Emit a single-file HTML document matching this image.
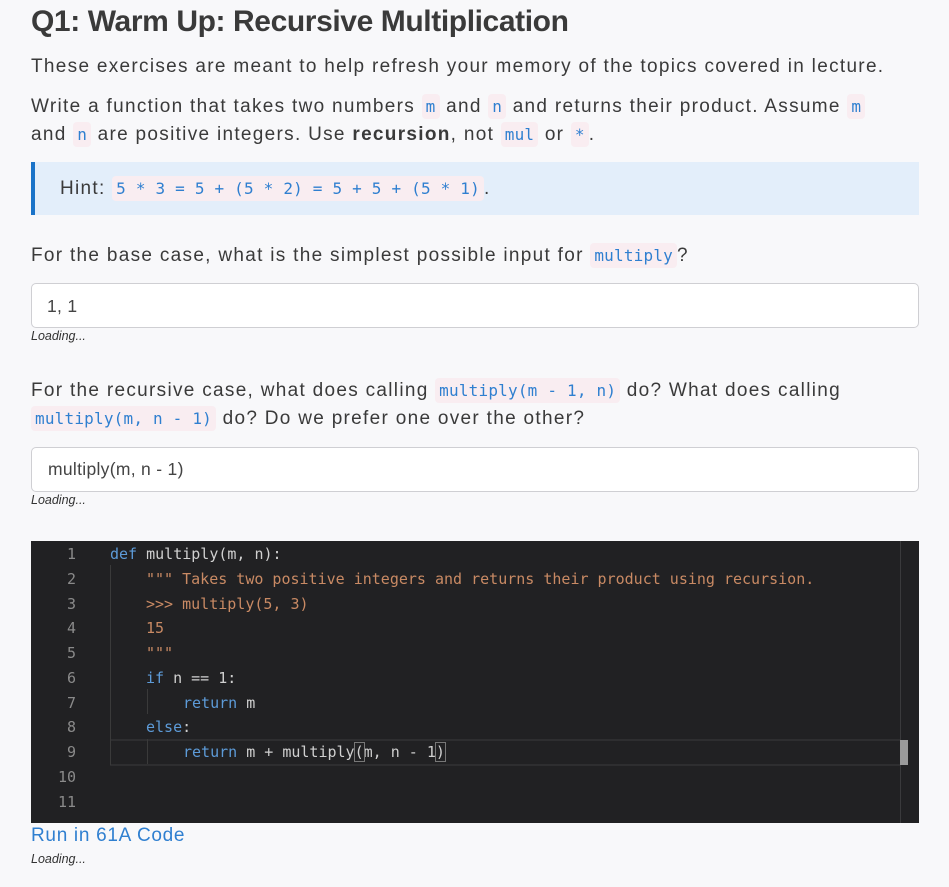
<!DOCTYPE html>
<html><head><meta charset="utf-8">
<style>
body{margin:0;width:949px;height:887px;background:#f8f8fa;font-family:"Liberation Sans",sans-serif;color:#333;position:relative;overflow:hidden}
.a{position:absolute;white-space:nowrap}
.t{font-size:19px;letter-spacing:1.3px;color:#3a3a3a}
code{font-family:"DejaVu Sans Mono",monospace;font-size:16px;color:#2f7fd0;background:#f9edf1;border-radius:4px;padding:3px 4px;letter-spacing:0.2px}
h1{margin:0;font-size:30px;font-weight:bold;color:#3a3a3a;letter-spacing:-0.4px}
.inp{position:absolute;left:31px;width:886px;border:1px solid #cfcfd3;border-radius:5px;background:#fff;font-size:17.5px;color:#444;letter-spacing:0.3px}
.load{font-size:12.5px;font-style:italic;color:#333}
.ed{position:absolute;left:31px;top:541px;width:888px;height:282px;background:#212123}
.ln{position:absolute;left:40px;width:36px;text-align:right;font-family:"DejaVu Sans Mono",monospace;font-size:15px;color:#8a8a8a}
.cd{position:absolute;font-family:"DejaVu Sans Mono",monospace;font-size:15px;color:#d0d0d0;white-space:pre}
.k{color:#5d9bd8}.s{color:#c98a64}
</style></head><body>
<h1 class="a" style="left:31px;top:5px">Q1: Warm Up: Recursive Multiplication</h1>
<div class="a t" style="left:31px;top:56px">These exercises are meant to help refresh your memory of the topics covered in lecture.</div>
<div class="a t" style="left:31px;top:96px">Write a function that takes two numbers <code>m</code> and <code>n</code> and returns their product. Assume <code>m</code></div>
<div class="a t" style="left:31px;top:124px">and <code>n</code> are positive integers. Use <b>recursion</b>, not <code>mul</code> or <code>*</code>.</div>
<div class="a" style="left:31px;top:162px;width:884px;height:53px;background:#e3eefa;border-left:4px solid #1a73c8"></div>
<div class="a t" style="left:60px;top:178px">Hint: <code>5 * 3 = 5 + (5 * 2) = 5 + 5 + (5 * 1)</code>.</div>
<div class="a t" style="left:31px;top:245px">For the base case, what is the simplest possible input for <code>multiply</code>?</div>
<div class="inp" style="top:283px;height:43px"><span class="a" style="left:15px;top:12px">1, 1</span></div>
<div class="a load" style="left:31px;top:329px">Loading...</div>
<div class="a t" style="left:31px;top:380px">For the recursive case, what does calling <code>multiply(m - 1, n)</code> do? What does calling</div>
<div class="a t" style="left:31px;top:408px"><code>multiply(m, n - 1)</code> do? Do we prefer one over the other?</div>
<div class="inp" style="top:447px;height:43px"><span class="a" style="left:16px;top:11px">multiply(m, n - 1)</span></div>
<div class="a load" style="left:31px;top:493px">Loading...</div>
<div class="ed">
<div class="a" style="left:79px;top:198px;width:791px;height:23px;border-top:2px solid #2e2e30;border-bottom:2px solid #2e2e30"></div>
<div class="a" style="left:869px;top:0;width:1px;height:282px;background:#3a3a3c"></div>
<div class="a" style="left:869px;top:199px;width:8px;height:25px;background:#9a9a9a"></div>
<div class="a" style="left:79px;top:24px;width:1px;height:200px;background:#3a3a3a"></div>
<div class="a" style="left:116px;top:148px;width:1px;height:25px;background:#3a3a3a"></div>
<div class="a" style="left:116px;top:198px;width:1px;height:25px;background:#3a3a3a"></div>
</div>
<div class="ln" style="top:545px">1</div><div class="ln" style="top:570px">2</div><div class="ln" style="top:595px">3</div><div class="ln" style="top:619px">4</div><div class="ln" style="top:644px">5</div><div class="ln" style="top:669px">6</div><div class="ln" style="top:694px">7</div><div class="ln" style="top:718px">8</div><div class="ln" style="top:743px">9</div><div class="ln" style="top:768px">10</div><div class="ln" style="top:793px">11</div>
<div class="cd" style="left:110px;top:545px"><span class="k">def</span> multiply(m, n):</div>
<div class="cd s" style="left:146px;top:570px">""" Takes two positive integers and returns their product using recursion.</div>
<div class="cd s" style="left:146px;top:595px">&gt;&gt;&gt; multiply(5, 3)</div>
<div class="cd s" style="left:146px;top:619px">15</div>
<div class="cd s" style="left:146px;top:644px">"""</div>
<div class="cd" style="left:146px;top:669px"><span class="k">if</span> n == 1:</div>
<div class="cd" style="left:183px;top:694px"><span class="k">return</span> m</div>
<div class="cd" style="left:146px;top:718px"><span class="k">else</span>:</div>
<div class="cd" style="left:183px;top:743px"><span class="k">return</span> m + multiply<span style="outline:1px solid #777">(</span>m, n - 1<span style="outline:1px solid #777">)</span></div>
<div class="a" style="left:31px;top:825px;font-size:19px;color:#2f7fd0;letter-spacing:0.7px">Run in 61A Code</div>
<div class="a load" style="left:31px;top:852px">Loading...</div>
</body></html>
